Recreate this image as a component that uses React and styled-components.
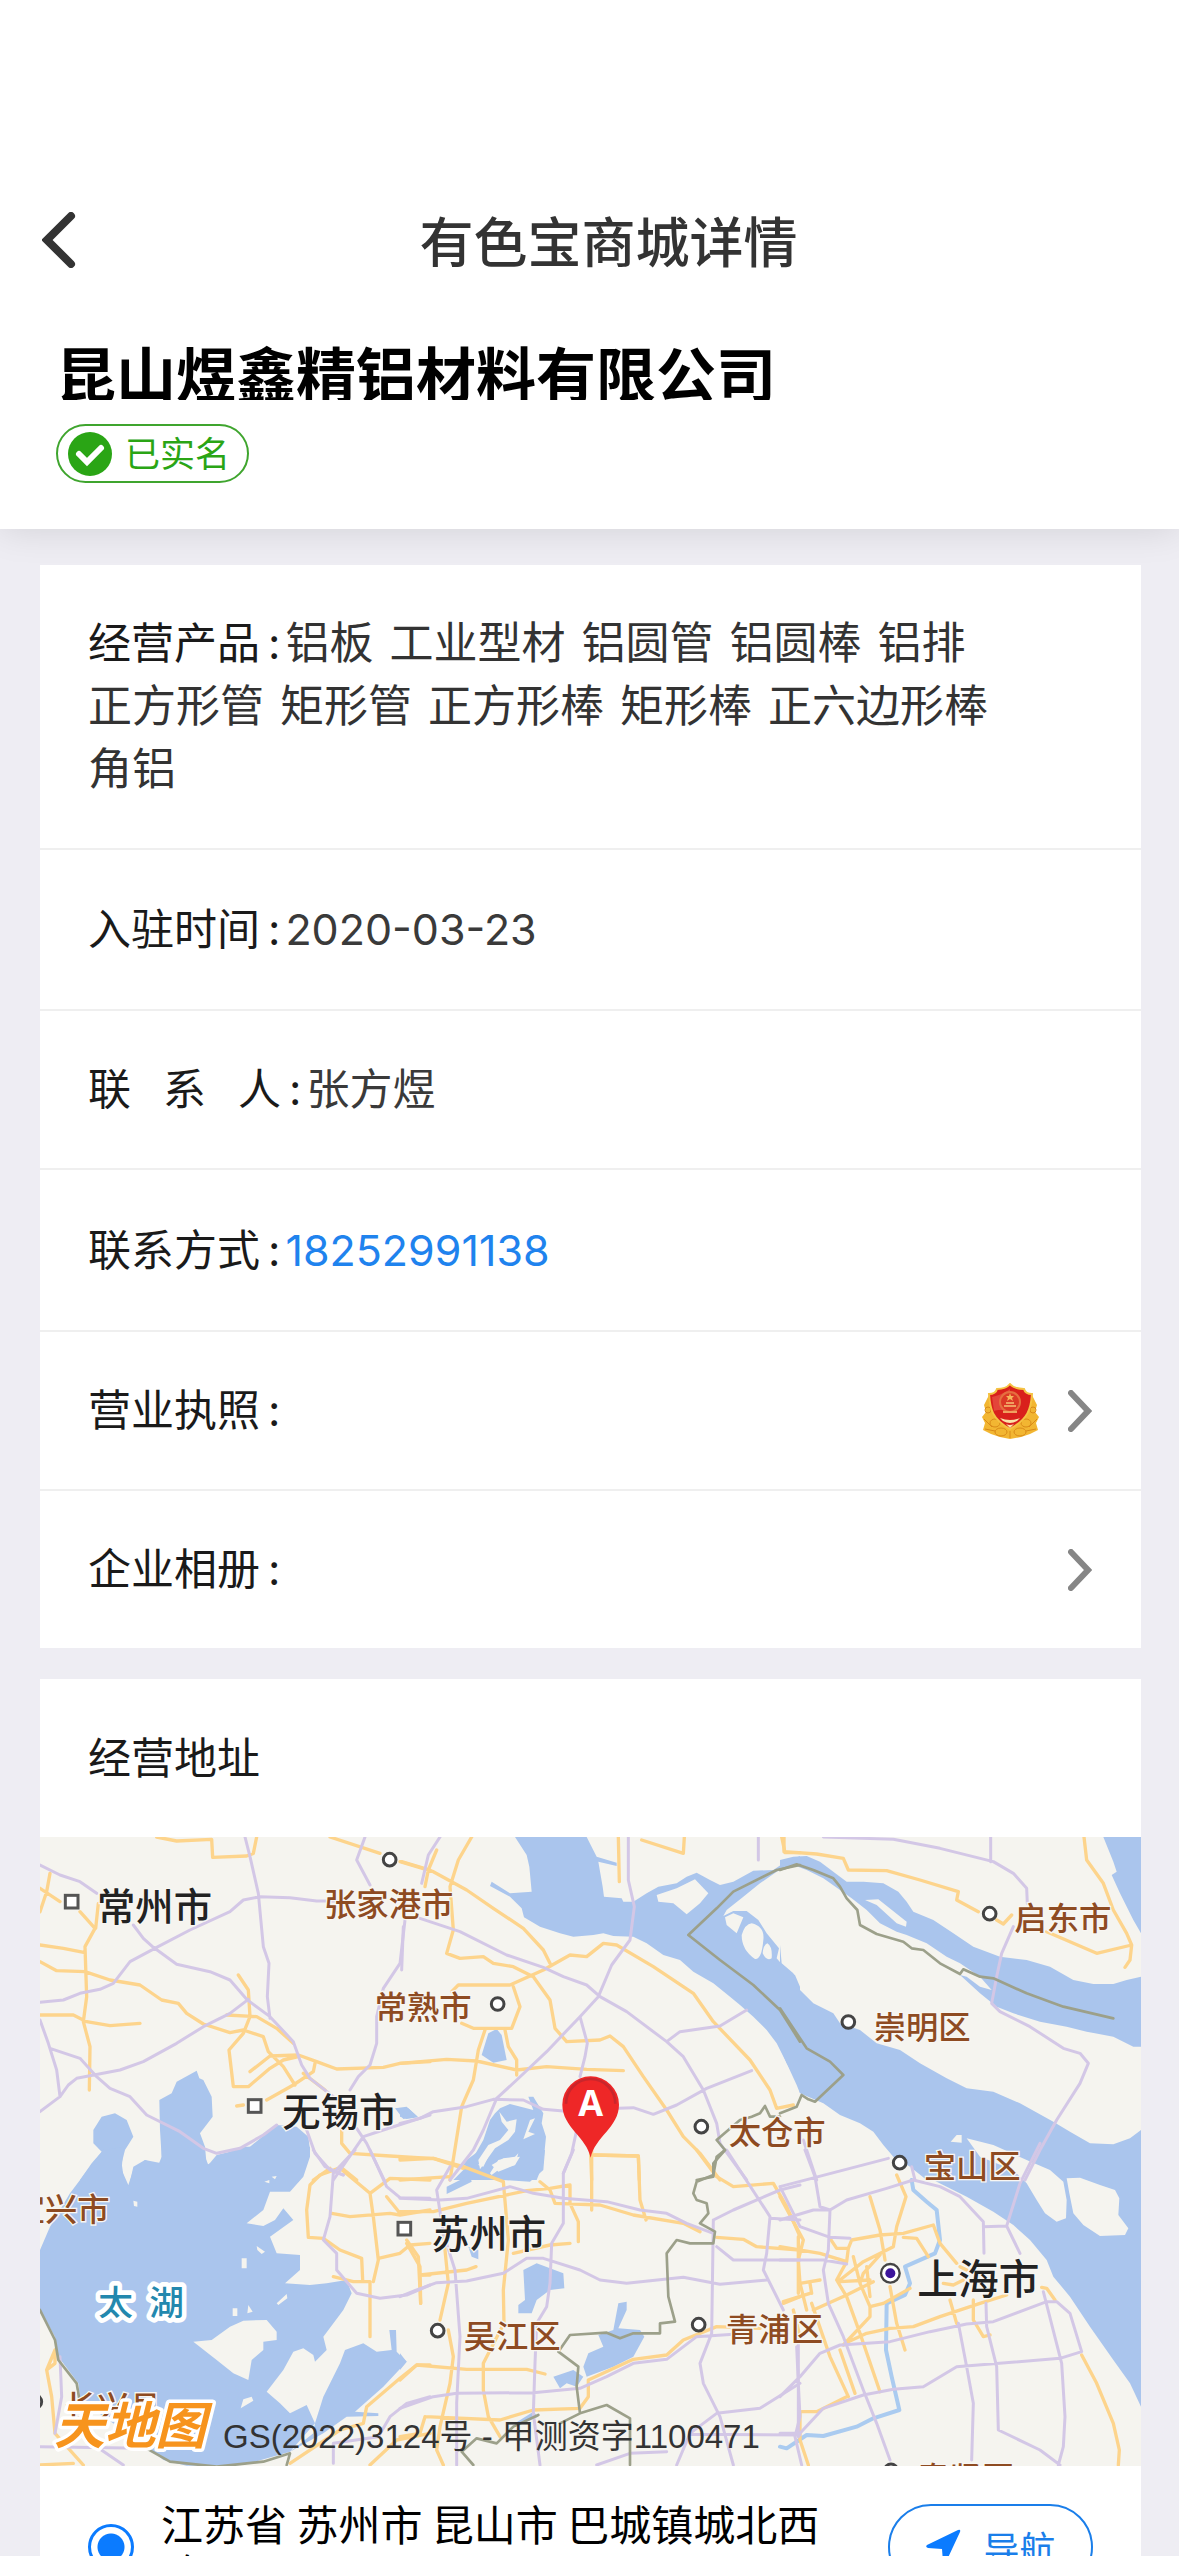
import styled, { createGlobalStyle } from "styled-components";

const sans = `"Inter", "Noto Sans CJK SC", sans-serif`;
const cjk = `"Noto Sans CJK SC", sans-serif`;

const products = [
  "铝板",
  "工业型材",
  "铝圆管",
  "铝圆棒",
  "铝排",
  "正方形管",
  "矩形管",
  "正方形棒",
  "矩形棒",
  "正六边形棒",
  "角铝",
];

// every tile has its own origin inside the 3303 x 1887 map
const tiles = [
  {
    x: -30,
    y: -21,
    water:
      "M150 1050 185 1000 215 965 190 940 190 900 215 860 255 850 290 870 310 920 285 960 275 1000 282 1050ZM300 1055 310 1010 345 990 385 1005 395 980 390 900 388 810 425 790 440 755 500 722 508 745 520 750 545 800 548 860 510 910 525 950 530 1005 560 990 600 965 660 950 740 885 800 890 835 920 840 960 825 1010 805 1055ZM1095 835 1130 830 1160 858 1120 867Z",
    highway:
      "M30 105 90 135 150 155 200 190M310 285 340 325 370 352 440 403 540 425 600 450 650 508 720 560 790 635 815 705 840 745 910 800M645 21 660 80 685 190 700 350 717 400 712 500 720 565M30 517 100 510 150 490 210 478 250 460 300 395 380 352 480 300 600 245 640 210 690 200 780 203 860 213 930 213M655 508 600 550 520 590 440 640 340 695 270 720 140 745 115 765 90 800 30 845M30 570 55 640 80 720 90 800M60 655 150 685 200 740 240 775 300 800 350 855 450 905 520 955 560 970 630 955 700 915 740 885M1005 21 980 90 1020 165M1125 270 1110 400 1060 475 1040 560 1040 640 1020 705 985 740 960 780M830 900 855 970 900 1020 940 1035M910 1050 1000 920 1060 900 1200 855M980 895 1010 940 1065 1055",
    road: "M380 21 440 33 545 28 548 82 650 78 670 70 680 21M900 21 1050 70M1115 95 1200 120M60 130 50 185 30 245M30 175 90 215M150 245 195 295 165 350 170 500 160 575 180 650 178 780M205 220 197 295M30 345 100 355 165 368M30 395 80 422 165 425 240 450 330 465 395 510 445 520 470 550 520 582 600 608 640 600 700 620 715 665 760 710 795 765M30 555 130 555 170 575 240 587 330 580M625 435 655 480 660 560 640 610 597 660 610 770 655 770 720 715 760 690 805 680M590 555 680 560 740 595 790 640M660 725 720 678 805 675 860 695 920 717 1060 712 1110 700 1200 695M855 700 850 725 790 765 710 810M820 730 885 780M620 828 640 825M935 900 935 940 960 970 1080 978 1200 985M850 1050 900 1015M930 1010 980 1050",
  },
  {
    x: 1080,
    y: -21,
    water:
      "M345 21 380 75 388 110 395 185 330 190 275 155 270 168 330 200 365 235 372 262 420 290 480 310 520 320 580 315 610 310 640 318 700 320 740 340 790 375 840 390 880 425 940 460 990 500 1020 525 1060 560 1100 600 1130 640 1160 700 1190 765 1200 790 1200 470 1185 435 1160 420 1130 385 1137 355 1100 310 1075 270 1040 243 1000 243 970 258 980 240 1030 200 1080 160 1130 125 1160 112 1200 108 1200 78 1150 100 1120 120 1060 122 1000 155 960 165 930 150 890 128 860 140 830 160 775 170 740 190 700 215 670 215 665 205 612 200 608 170 595 95 650 108 650 98 590 80 560 21ZM265 610 290 597 305 615 320 690 280 698 245 675ZM285 850 300 835 330 822 400 840 385 800 400 800 430 850 425 880 438 920 430 1000 410 1050 160 1050 210 1000 250 930 270 870ZM0 835 25 835 55 862 20 867 0 860Z",
    land: "M770 195 830 175 885 148 925 190 900 220 860 253 820 220 775 215ZM975 262 1000 250 1030 262 1010 310 980 285ZM1055 280Q1095 290 1090 330 1085 390 1065 387 1025 360 1025 315 1035 282 1055 280ZM1102 340Q1118 350 1115 385 1100 395 1088 370 1090 345 1102 340ZM298 845 320 875 350 868 345 905 325 930 285 955 240 1018 235 990 265 945 300 930 325 900 305 875ZM390 870 405 865 385 905 405 912 370 928ZM270 1030 295 990 320 985 360 980 345 1005 295 1020 275 1035Z",
    highway:
      "M120 21 85 75 65 160M10 290 5 420M60 265 180 305 320 375 430 412 490 440 560 465 600 500 680 545 800 635 850 680 910 780 950 880 960 940 1040 1050M685 21 685 150 703 230 690 330 635 405 595 500 540 560 440 665 350 750 290 805 250 900 220 960 150 1050M540 560 562 640 555 680 540 740M530 900 515 970 490 1030M0 880 60 865 100 845 200 830 280 808 370 810 430 838 490 843M655 835 700 833 760 853 830 825 920 775 1055 722M800 635 840 605 960 588 1040 540M1075 21 1075 90",
    road: "M0 95 100 125 200 180 280 235 370 295 430 360 450 400M215 21 175 90 150 170 160 300 140 370 180 385 250 380 280 400 340 410 400 440 450 510 465 595 500 635 600 630 630 618 670 650 730 740 800 840 850 920 900 970 960 1050M110 60 85 120 75 170M155 485 175 465 330 465 430 420 510 375 560 380 610 340 650 345 760 410 880 490 940 575 1050 690 1110 780 1130 835 1180 825M185 580 220 595 335 595 360 530 340 470M255 600 235 660 220 750 185 830 150 1050M315 600 325 650 350 690 350 735M0 700 140 688 230 693 350 720 440 710 560 718 670 722M655 21 658 155M725 30 850 70 853 21M1145 21 1155 68 1200 68M572 970 575 1050M580 975 715 978 718 1050M0 985 100 985 190 1015",
    border:
      "M1200 105 1130 120 1000 185 950 235 865 315 960 390 1060 465 1140 540 1200 635M1140 860 1110 860 1095 828 1080 850 1055 860 1020 870 950 930 975 960 940 1000 940 1040 890 1050",
  },
  {
    x: 2220,
    y: -21,
    water:
      "M0 90 40 80 80 78 120 95 160 125 200 155 250 155 310 160 355 185 380 215 400 245 460 270 520 310 580 350 660 380 740 390 810 410 880 450 940 462 1000 462 1040 450 1083 440 1083 650 1060 650 1000 620 920 605 860 590 780 575 700 550 650 530 600 490 540 435 560 440 600 470 635 480 600 440 540 400 500 380 440 340 380 315 350 305 300 280 260 240 215 205 180 180 130 145 80 120 40 105 0 115ZM970 21 1083 21 1083 310 1060 270 1020 190 995 135 1010 125 1000 95ZM0 345 5 400 40 430 60 480 100 520 160 550 180 580 240 600 290 640 360 660 420 700 500 745 560 775 640 785 720 820 820 875 870 905 930 940 1000 943 1050 925 1083 900 1083 1100 440 1050 390 1010 340 980 310 945 280 905 240 880 180 855 130 820 60 790 50 750 20 700 0 650Z",
    land: "M255 210 295 208 380 275 378 290 350 280 290 225ZM512 935 530 915 545 915 545 938Z",
    highway:
      "M130 21 340 28 480 55 640 95 700 130 740 175 742 220M700 290 665 370 650 440 635 520 660 545 750 590 850 655 900 670 925 700 900 760 830 870 780 960 735 1050M632 21 632 95M70 930 110 1050M395 1010 405 1050",
    road: "M12 21 12 65 110 72 190 85 205 120 320 122 420 150 535 185 530 210 595 245M650 270 670 282 695 255M800 305 950 370 1055 345 1050 390 1035 412M912 21 920 90 970 160 1000 240 1040 310 1055 345",
    border:
      "M0 120 50 103 100 120 160 145 180 170 200 205 232 240 240 285 290 312 370 335 395 355 430 360 480 400 540 432 550 418 600 440 640 445 740 490 850 530 1000 565M0 535 80 655 150 695 190 735 105 815 85 808 65 795 50 830 0 850",
  },
  {
    x: -30,
    y: 939,
    water:
      "M220 0 180 50 120 130 60 230 30 300 30 480 75 560 85 620 145 700 150 740 220 800 340 880 400 930 470 947 640 945 780 905 850 850 855 820 830 765 780 790 750 760 710 725 760 660 790 605 820 595 850 615 855 635 890 600 880 560 940 480 965 430 950 390 890 400 840 405 765 400 810 360 810 315 740 310 720 260 790 210 760 175 735 210 700 228 650 220 700 180 720 125 780 125 820 80 840 20 840 -10 640 -10 600 5 560 15 535 45 525 20 525 -10 395 -10 395 40 345 30 310 60 295 105 275 60 280 -10ZM855 820 880 740 930 640 945 600 1000 580 1040 605 1085 600 1078 540 1098 540 1100 605 1130 635 1060 710 975 785 1045 790 1045 798 950 800 880 850 780 905Z",
    land: "M490 575 545 570 600 530 640 512 710 510 740 545 740 570 700 575 700 600 665 630 655 690 610 670 560 630ZM632 775 640 748 665 740 670 752ZM635 325H650V355H635ZM680 288 705 305 695 312 682 300ZM740 460 770 432 772 445 745 465ZM608 475 622 475 622 498 608 498ZM655 465 668 485 652 490ZM310 152 322 155 322 170 312 168ZM703 95 718 90 718 100ZM725 80 740 78 735 88Z",
    highway:
      "M850 0 885 50 940 75M975 0 910 70 900 200 880 270 920 310 920 360 980 430 1050 445 1130 435 1200 405M1020 0 1070 110 1110 143 1200 145M90 620 95 740 75 850M30 890 340 895M200 890 280 945M1200 740 1130 760 1080 800 1045 860 910 880 910 940",
    road: "M835 262 830 180 840 105 870 75 925 55M905 190 960 200 1080 190 1110 195 1200 180M930 55 1020 130 1030 200 1045 330 1030 395M835 262 880 265 930 300 995 325 998 390M1020 130 1080 85 1200 90M1070 140 1110 190M910 380 970 395 1020 395 1020 560M1045 325 1110 310 1140 285 1200 280M1130 270 1165 320 1172 460M1175 375 1200 375M1200 645 1160 645 1110 685 1010 770 1000 820 930 840 780 940M1200 850 1100 870 1020 945M75 600 50 660 65 740 75 850 160 945M75 600 75 640 50 660M30 945 130 940",
    border:
      "M30 480 75 570 85 630 140 700 150 760M340 890 420 935 560 950 700 935 780 910 770 945",
  },
  {
    x: 1080,
    y: 939,
    water:
      "M200 30 240 0 435 0 430 60 390 95 310 90 230 60 190 45ZM140 110 210 75 215 95 140 132ZM370 360 410 340 450 355 490 370 493 415 450 420 410 450 395 490 355 490 355 465 375 450ZM655 460 680 455 680 480 655 535 720 540 733 560 700 620 640 650 560 680 550 650 565 610 610 590 595 555 640 540ZM460 680 520 660 550 680 530 710 500 700 480 715ZM0 610 20 635 0 660ZM205 290 235 300 235 328 215 320ZM345 820 400 785 415 800 370 820Z",
    land: "M235 45 260 0 275 0 250 50ZM275 45 310 25 345 20 355 10 345 45 295 65Z",
    highway:
      "M0 145 120 150 200 145 330 110 400 130 490 145 620 155 720 180 800 190 860 220 940 250M520 0 490 70 490 220 455 280 450 400 440 470 410 520 405 640 400 790 420 945M0 440 50 420 110 398 200 393 310 370 380 325 430 325 540 360 600 390 680 400 850 382 960 403 1100 390M150 50 110 120 130 250 165 360 180 560 170 760 170 945M0 775 100 740 170 730 400 728 540 715 620 680 700 640 800 628 890 560 1000 553M980 0 1110 200 1100 310 1090 360 1150 480M940 210 1000 180 1140 120 1200 105M940 210 935 550 900 640 910 700 960 800 1000 945M950 290 1000 330 1200 330M830 945 870 850 950 790 1080 775 1200 700M590 945 690 910 800 905M870 853 1200 855M1110 205 1200 210M1195 560 1195 860",
    road: "M0 185 100 185 200 160 380 122 450 115 510 105 510 160 535 215 535 275M575 0 575 180M585 15 715 18 720 150 738 210M420 95 450 120 465 160 600 165 700 195 850 220 900 245M310 95 325 270 310 420 312 520 250 640 250 720 265 800 300 860M340 310 450 285 510 280M60 375 200 360 228 350M130 250 145 400 120 510M20 280 60 350 62 460M0 690 50 645 200 658 380 658 435 672M145 540 160 620 150 700 120 830 110 900 130 945M75 800 300 810 400 780 540 775 565 740 565 690 700 628 800 615 850 570 950 530 1080 535M0 860 60 850 75 800M890 0 950 80 1000 110 1120 100 1160 170 1200 260M950 262 1030 268 1070 290 1200 300M0 90 150 80M0 30 100 25 190 50 310 95M1195 260 1195 430M1150 460 1200 440M1180 480 1200 560",
    border:
      "M975 0 950 20 940 75 890 95 880 130 890 150 920 160 925 190 900 220 945 245 940 280 870 280 830 270 800 310 805 440 825 515 780 520 780 550 700 550 660 565 620 548 510 555 475 605 535 650 530 710 540 790 620 765 690 805 690 945M540 790 480 820M220 945 185 905 230 865 290 880 340 830 415 795",
  },
  {
    x: 2220,
    y: 939,
    water:
      "M330 -10 400 55 470 95 560 140 640 185 700 225 750 270 800 330 820 380 870 440 930 530 1000 630 1050 700 1083 770 1083 -10Z",
    land: "M560 -35 640 -15 740 30 810 60 850 95 860 150 858 205 830 215 795 190 770 150 740 100 700 60 600 20ZM860 85 900 83 960 105 1005 120 1018 145 1015 195 1045 235 1035 255 960 258 910 225 880 190 868 130Z",
    river:
      "M395 90 400 120 440 155 470 180 480 270 465 310 375 350 390 400 375 435 320 460 318 600 335 680 358 780 280 805 230 830 130 858 80 855 20 895 0 890",
    highway:
      "M75 0 105 80 120 170 150 180M0 110 325 25M0 210 100 180 150 180 200 150 320 115 400 90 480 110 540 140 610 215 612 310M610 230 680 228 720 310M150 180 145 300 130 360 145 460 190 560 250 720 290 820 330 930M780 -20 720 100 680 228M0 110 60 230 150 262 210 265M0 330 130 330 200 342M0 740 60 680 120 610 180 585 330 575 450 545 560 522 640 515 800 455M790 425 845 640 855 800 850 890 835 945M800 455 830 455 870 490 905 605 840 625 530 650 430 710 340 718 250 735 130 775 60 850 0 850M535 520 560 650 580 760 575 930M618 460 620 530 650 650 655 840 780 900 840 945M50 590 55 700 60 800 45 860 65 945",
    road: "M0 140 70 270 55 330 60 400 80 480M0 290 120 310 200 335M270 140 300 240 315 330M350 75 378 140 350 230 340 290 250 335 180 390M150 265 170 295 205 295 215 270 300 255 370 250 460 225 480 280 530 340M370 262 410 265 445 320M205 295 200 335 170 390 200 440 240 550 300 725M10 455 90 430 M60 400 120 390M90 400 95 430M100 480 200 435 280 395M180 395 270 390M300 315 250 370 240 400 270 470 310 460 390 415M220 320 240 400M260 350 270 440M190 585 270 500 270 470M95 460 150 620 205 740M180 600 225 730M205 575 260 550 330 535 400 530 480 500 600 460 680 435M330 410 350 520 375 600M510 450 530 520M580 450 580 510 610 560 630 555M65 785 110 785 200 740M60 785 60 870 85 945M905 615 950 700 1000 820 1018 900 1015 945M785 412 800 415 825 450M540 350 560 360M490 400 520 405 550 390",
  },
];

const cities = [
  { name: "常州市", x: 171, y: 251, mark: [95, 194], kind: "city" },
  { name: "无锡市", x: 727, y: 866, mark: [644, 807], kind: "city" },
  { name: "苏州市", x: 1173, y: 1232, mark: [1093, 1175], kind: "city" },
  { name: "上海市", x: 2632, y: 1371, mark: [2551, 1309], kind: "capital" },
  { name: "张家港市", x: 852, y: 236, mark: [1049, 68] },
  { name: "常熟市", x: 1004, y: 546, mark: [1373, 501] },
  { name: "启东市", x: 2923, y: 278, mark: [2849, 230] },
  { name: "崇明区", x: 2501, y: 606, mark: [2425, 555] },
  { name: "太仓市", x: 2066, y: 920, mark: [1984, 869] },
  { name: "宝山区", x: 2651, y: 1023, mark: [2579, 977] },
  { name: "吴江区", x: 1271, y: 1532, mark: [1193, 1481] },
  { name: "青浦区", x: 2058, y: 1513, mark: [1976, 1463] },
  { name: "宜兴市", x: -82, y: 1151 },
  { name: "长兴县", x: 73, y: 1745, mark: [-14, 1694] },
  { name: "奉贤区", x: 2631, y: 1960, mark: [2553, 1900] },
];

const Marker = ({ at, kind }) => {
  const [x, y] = at;

  if (kind === "city") {
    return (
      <rect x={x - 19} y={y - 19} width="38" height="38" fill="#fff" stroke="#555" strokeWidth="9" />
    );
  }

  if (kind === "capital") {
    return (
      <g>
        <circle cx={x} cy={y} r="28" fill="#fff" stroke="#444" strokeWidth="7" />
        <circle cx={x} cy={y} r="15" fill="#3c149c" />
      </g>
    );
  }

  return <circle cx={x} cy={y} r="19" fill="#fff" stroke="#444" strokeWidth="9" />;
};

const MapDrawing = () => {
  const layer = (key, props) =>
    tiles.map((t) =>
      t[key] ? (
        <path key={key + t.x + t.y} d={t[key]} transform={`translate(${t.x} ${t.y})`} {...props} />
      ) : null
    );
  const line = { fill: "none", strokeLinejoin: "round", strokeLinecap: "round" };

  return (
    <MapSvg viewBox="0 0 3303 1887" preserveAspectRatio="xMidYMid slice" role="img" aria-label="地图">
      {layer("water", { fill: "#aac5ed" })}
      {layer("land", { fill: "#f5f4ef" })}
      {layer("river", { ...line, stroke: "#aacbf0", strokeWidth: 12 })}
      {layer("road", { ...line, stroke: "#fdd48c", strokeWidth: 10 })}
      {layer("highway", { ...line, stroke: "#d3c7e6", strokeWidth: 9 })}
      {layer("border", { ...line, stroke: "#9ca08a", strokeWidth: 8 })}

      {cities.map((c) => (
        <g key={c.name}>
          {c.mark && <Marker at={c.mark} kind={c.kind} />}
          <CityName x={c.x} y={c.y} $kind={c.kind}>
            {c.name}
          </CityName>
        </g>
      ))}

      <LakeName x="175" y="1434">
        太
      </LakeName>
      <LakeName x="328" y="1434">
        湖
      </LakeName>
      <MapBrand x="42" y="1822">
        天地图
      </MapBrand>

      <path
        d="M1652 962C1640 900 1567 870 1567 803A85 85 0 0 1 1737 803C1737 870 1664 900 1652 962Z"
        fill="#ee2727"
      />
      <path d="M1578 800A74 74 0 0 1 1726 800" fill="none" stroke="#c9262c" strokeWidth="8" />
      <PinLetter x="1652" y="837">
        A
      </PinLetter>
    </MapSvg>
  );
};

const Chevron = () => (
  <svg width="24" height="42" viewBox="0 0 24 42" aria-hidden="true">
    <path d="M3 3 20 21 3 39" fill="none" stroke="#868686" strokeWidth="6" strokeLinecap="round" />
  </svg>
);

const Emblem = () => (
  <svg width="57" height="56" viewBox="0 0 57 56" aria-hidden="true">
    <path
      d="M7 12 2 22 4 29 0 34 3 40 1 47 9 51 18 54 28 56 39 54 48 51 56 47 54 40 57 34 53 29 55 22 50 12Z"
      fill="#f2b632"
    />
    <g fill="none" stroke="#d98a18" strokeWidth="1">
      <circle cx="6" cy="27" r="3" />
      <circle cx="51" cy="27" r="3" />
      <ellipse cx="13" cy="40" rx="5" ry="4" />
      <ellipse cx="44" cy="40" rx="5" ry="4" />
      <ellipse cx="19" cy="49" rx="6" ry="4" />
      <ellipse cx="38" cy="49" rx="6" ry="4" />
      <path d="M2 36 10 44M3 46 13 48M55 36 47 44M54 46 44 48M28 48V55" />
    </g>
    <path
      d="M28 1C24 6 19 6 15 6 14 10 11 11 7 11 8 26 10 36 28 46 46 36 49 26 50 11 46 11 43 10 42 6 38 6 32 6 28 1Z"
      fill="#d9201c"
      stroke="#f5c445"
      strokeWidth="2"
    />
    <path d="M10 14C18 12 22 10 28 6V26C20 28 16 26 12 28Z" fill="#ee6a58" opacity=".5" />
    <circle cx="28" cy="19" r="10" fill="#dc3a26" stroke="#e5703f" strokeWidth="2" />
    <path d="M28 10 29 13H32L30 15 31 18 28 16 25 18 26 15 24 13H27Z" fill="#f5b65a" />
    <path d="M22 23H34M24 20H32M21 29H35" stroke="#f0a060" strokeWidth="2" />
    <path d="M18 35Q28 39 38 35L35 38Q28 42 21 38ZM24 41Q28 43 32 41L28 45Z" fill="#fbe3a8" />
  </svg>
);

const App = () => {
  return (
    <Page>
      <GlobalStyle />

      <Header>
        <NavBar>
          <BackButton type="button" aria-label="返回">
            <svg width="34" height="56" viewBox="0 0 34 56" aria-hidden="true">
              <path
                d="M29 4 5 28 29 52"
                fill="none"
                stroke="#333"
                strokeWidth="8"
                strokeLinecap="round"
              />
            </svg>
          </BackButton>
          <Title>有色宝商城详情</Title>
        </NavBar>

        <Company>昆山煜鑫精铝材料有限公司</Company>
        <Verified>
          <svg width="44" height="44" viewBox="0 0 44 44" aria-hidden="true">
            <circle cx="22" cy="22" r="22" fill="#2aa515" />
            <path
              d="M11 22 19 30 33 16"
              fill="none"
              stroke="#fff"
              strokeWidth="6"
              strokeLinecap="round"
            />
          </svg>
          已实名
        </Verified>
      </Header>

      <Content>
        <Card>
          <Products>
            <Label>
              经营产品<Colon>:</Colon>
            </Label>
            {products.map((p) => (
              <Product key={p}>{p}</Product>
            ))}
          </Products>
          <Row>
            <Label>
              入驻时间<Colon>:</Colon>
            </Label>
            <Value>2020-03-23</Value>
          </Row>
          <Row>
            <Label>
              {"联\u00a0\u00a0\u2009系\u00a0\u00a0\u2009人"}
              <Colon>:</Colon>
            </Label>
            <Value>张方煜</Value>
          </Row>
          <Row $height={162}>
            <Label>
              联系方式<Colon>:</Colon>
            </Label>
            <Phone href="tel:18252991138">18252991138</Phone>
          </Row>
          <RowLink href="#license">
            <Label>
              营业执照<Colon>:</Colon>
            </Label>
            <RowEnd>
              <Emblem />
              <Chevron />
            </RowEnd>
          </RowLink>
          <RowLink href="#album">
            <Label>
              企业相册<Colon>:</Colon>
            </Label>
            <RowEnd>
              <Chevron />
            </RowEnd>
          </RowLink>
        </Card>

        <Card>
          <Row $height={158}>
            <Label as="h2">经营地址</Label>
          </Row>
          <MapBox>
            <MapDrawing />
            <MapNote>GS(2022)3124号 - 甲测资字1100471</MapNote>
          </MapBox>

          <AddressRow>
            <Choice>
              <Radio type="radio" name="address" defaultChecked />
              <Address>
                江苏省 苏州市 昆山市 巴城镇城北西路{"\u3000\u3000"}号
              </Address>
            </Choice>
            <NavigateButton type="button">
              <svg width="36" height="36" viewBox="0 0 36 36" aria-hidden="true">
                <path
                  d="M33 1 2 16Q0 18 3 19L17 20 18 33Q19 36 21 33L35 3Q36 0 33 1Z"
                  fill="#0b7bff"
                />
              </svg>
              导航
            </NavigateButton>
          </AddressRow>
        </Card>
      </Content>
    </Page>
  );
};

export default App;

const GlobalStyle = createGlobalStyle`
  * {
    box-sizing: border-box;
  }

  body {
    margin: 0;
    background: #eeedf3;
    font-family: ${sans};
    color: #1a1a1a;
  }
`;

const Page = styled.div`
  display: flex;
  flex-direction: column;
  height: 100vh;
`;

const Header = styled.header`
  position: relative;
  flex: none;
  padding: 174px 56px 46px;
  background: #fff;
  box-shadow: 0 0 36px rgba(0, 0, 0, 0.12);
`;

const NavBar = styled.div`
  display: flex;
  align-items: center;
  height: 132px;
  margin: 0 -18px 0 -14px;
`;

const BackButton = styled.button`
  display: flex;
  width: 34px;
  padding: 0;
  border: none;
  background: none;
`;

const Title = styled.h1`
  flex: 1;
  margin: 0;
  font-family: ${cjk};
  font-size: 54px;
  font-weight: 500;
  line-height: 78px;
  text-align: center;
  color: #333;
`;

const Company = styled.h2`
  height: 64px;
  margin: 30px 0 24px;
  overflow: hidden;
  font-family: ${cjk};
  font-size: 60px;
  font-weight: 700;
  line-height: 72px;
  white-space: nowrap;
  color: #000;
`;

const Verified = styled.div`
  display: inline-flex;
  align-items: center;
  gap: 13px;
  height: 59px;
  padding: 0 17px 0 10px;
  border: 2px solid #3fa52e;
  border-radius: 30px;
  font-size: 35px;
  line-height: 52px;
  color: #2aa515;
`;

const Content = styled.main`
  display: flex;
  flex: 1;
  flex-direction: column;
  gap: 31px;
  min-height: 0;
  padding: 36px 38px 0 40px;
  overflow: auto;
  scrollbar-width: none;
`;

const Card = styled.section`
  flex: none;
  background: #fff;
`;

const Row = styled.div`
  display: flex;
  align-items: center;
  height: ${({ $height }) => $height || 159}px;
  padding: 0 49px 0 48px;
  font-size: 43px;
  line-height: 63px;

  & + & {
    border-top: 2px solid #efefef;
  }
`;

const RowLink = styled(Row).attrs({ as: "a" })`
  border-top: 2px solid #efefef;
  color: inherit;
  text-decoration: none;
`;

const Products = styled.div`
  padding: 47px 48px;
  border-bottom: 2px solid #efefef;
  font-size: 44px;
  line-height: 63px;
`;

const Label = styled.span`
  margin: 0 5px 0 0;
  font-size: 43px;
  font-weight: 400;
  color: #1a1a1a;
`;

const Colon = styled.span`
  margin-left: 8px;
`;

const Value = styled.span`
  font-size: 43px;
  color: #3a3a3a;
`;

const Product = styled.span`
  display: inline-block;
  margin-right: 16px;
  color: #333;
`;

const Phone = styled.a`
  font-size: 43px;
  color: #1f83ee;
  text-decoration: none;
`;

const RowEnd = styled.span`
  display: flex;
  align-items: center;
  gap: 29px;
  margin-left: auto;
`;

const MapBox = styled.div`
  position: relative;
  height: 629px;
  overflow: hidden;
  background: #f5f4ef;
`;

const MapSvg = styled.svg`
  display: block;
  width: 100%;
  height: 100%;
`;

const CityName = styled.text`
  font-family: ${cjk};
  font-size: ${({ $kind }) => ($kind === "capital" ? 122 : $kind ? 115 : 97)}px;
  font-weight: 500;
  fill: ${({ $kind }) => ($kind ? "#222" : "#8e4b22")};
  stroke: #f8f6f2;
  stroke-width: 8px;
  paint-order: stroke;
`;

const LakeName = styled.text`
  font-family: ${cjk};
  font-size: 104px;
  font-weight: 500;
  fill: #2388ae;
  stroke: #fff;
  stroke-width: 28px;
  stroke-linejoin: round;
  paint-order: stroke;
`;

const MapBrand = styled.text`
  font-family: ${cjk};
  font-size: 152px;
  font-style: italic;
  font-weight: 700;
  fill: #f7941d;
  stroke: #fff;
  stroke-width: 20px;
  stroke-linejoin: round;
  paint-order: stroke;
`;

const PinLetter = styled.text`
  font-family: "Open Sans", sans-serif;
  font-size: 108px;
  font-weight: 700;
  text-anchor: middle;
  fill: #fff;
`;

const MapNote = styled.span`
  position: absolute;
  bottom: 6px;
  left: 183px;
  font-family: "Liberation Sans", ${cjk};
  font-size: 33px;
  line-height: 46px;
  color: #333;
`;

const AddressRow = styled.div`
  display: flex;
  align-items: center;
  justify-content: space-between;
  padding: 32px 48px;
`;

const Choice = styled.label`
  display: flex;
  align-items: center;
  gap: 27px;
`;

const Radio = styled.input`
  flex: none;
  appearance: none;
  width: 46px;
  height: 46px;
  margin: 0;
  border: 3px solid #0b7bff;
  border-radius: 50%;
  background: radial-gradient(circle, #0b7bff 13px, #fff 14px);
`;

const Address = styled.span`
  width: 672px;
  font-family: ${cjk};
  font-size: 42px;
  line-height: 49px;
  color: #000;
`;

const NavigateButton = styled.button`
  display: flex;
  align-items: center;
  justify-content: center;
  gap: 22px;
  width: 205px;
  height: 86px;
  padding: 0;
  border: 2px solid #1a7eea;
  border-radius: 43px;
  background: #fff;
  font-family: ${cjk};
  font-size: 36px;
  color: #1a7eea;
`;
